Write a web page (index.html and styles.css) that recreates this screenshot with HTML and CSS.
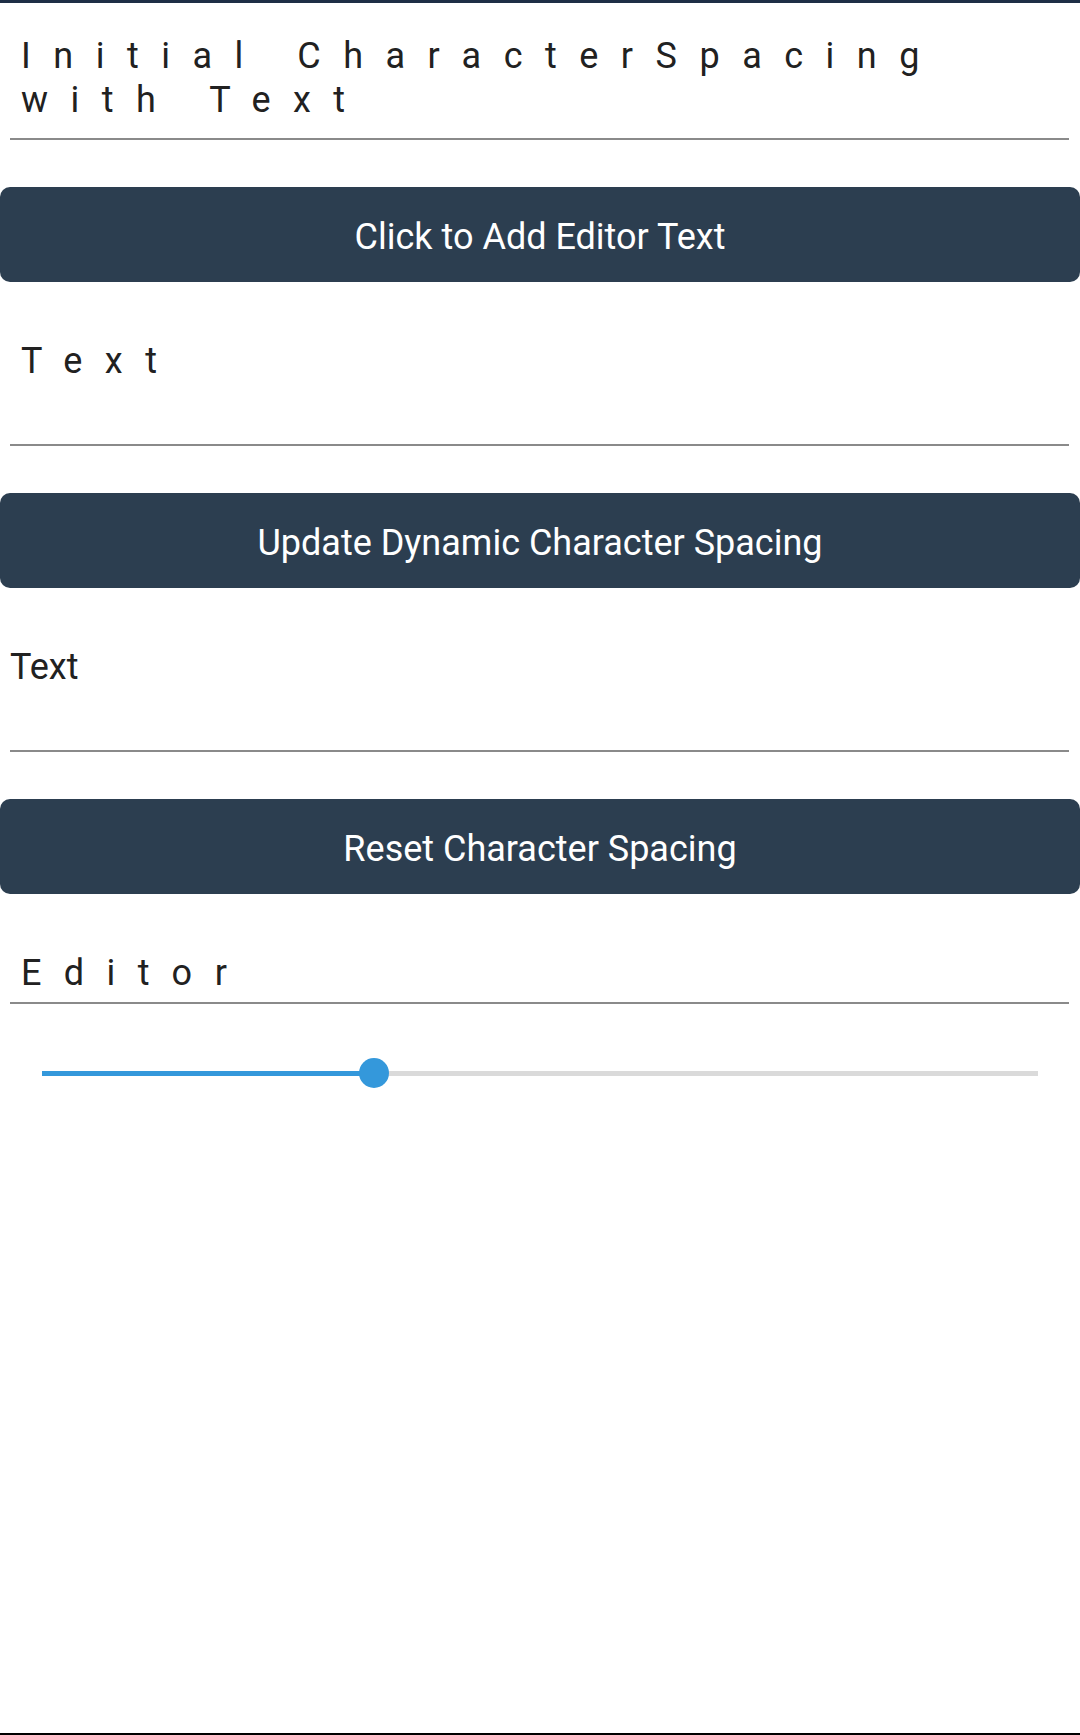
FILE: index.html
```html
<!DOCTYPE html>
<html>
<head>
<meta charset="utf-8">
<link rel="stylesheet" href="styles.css">
</head>
<body>
<div class="app">
  <div class="statusbar"></div>
  <div class="field field-editor"><div class="spaced">Initial CharacterSpacing<br>with Text</div></div>
  <div class="btn">Click to Add Editor Text</div>
  <div class="field field-tall"><div class="spaced">Text</div></div>
  <div class="btn">Update Dynamic Character Spacing</div>
  <div class="field field-tall"><div class="plain">Text</div></div>
  <div class="btn">Reset Character Spacing</div>
  <div class="field field-short"><div class="spaced">Editor</div></div>
  <div class="slider">
    <div class="fill" style="width:332px"></div>
    <div class="thumb"></div>
    <div class="rest"></div>
  </div>
  <div class="navedge"></div>
</div>
</body>
</html>
```

FILE: styles.css
```css
html, body {
  margin: 0;
  padding: 0;
  background: #ffffff;
}
body {
  font-family: Roboto, "Noto Sans", sans-serif;
  color: #212121;
}
.app {
  width: 1080px;
  min-height: 1735px;
  display: flex;
  flex-direction: column;
}
.statusbar {
  height: 3px;
  background: #1e2f46;
}
.field {
  box-sizing: border-box;
  margin: 0 11px 0 10px;
  border-bottom: 2px solid #8a8a8a;
  font-size: 36px;
  line-height: 44px;
}
.field-editor {
  height: 137px;
  padding-top: 31px;
}
.field-tall {
  height: 164px;
  padding-top: 57px;
}
.field-short {
  height: 110px;
  padding-top: 57px;
}
.spaced {
  letter-spacing: 22.5px;
  padding-left: 11px;
  white-space: nowrap;
}
.plain {
  padding-left: 0;
}
.btn {
  box-sizing: border-box;
  margin-top: 47px;
  height: 95px;
  padding-top: 4px;
  border-radius: 10px;
  background: #2c3e50;
  color: #ffffff;
  font-size: 36px;
  display: flex;
  align-items: center;
  justify-content: center;
}
.slider {
  margin: 54px 42px 0 42px;
  height: 30px;
  display: flex;
  align-items: center;
}
.fill {
  height: 5px;
  background: #3498db;
}
.thumb {
  position: relative;
  z-index: 1;
  width: 30px;
  height: 30px;
  border-radius: 50%;
  background: #3498db;
  margin: 0 -15px;
  flex: none;
}
.rest {
  flex: 1;
  height: 5px;
  background: #dadada;
}
.navedge {
  margin-top: auto;
  height: 2px;
  background: #000000;
}
```
